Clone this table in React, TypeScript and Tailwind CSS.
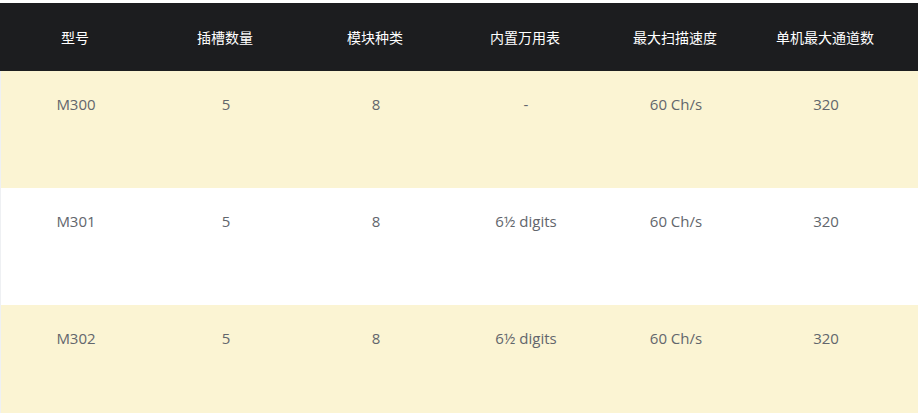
const HEADERS = ["型号", "插槽数量", "模块种类", "内置万用表", "最大扫描速度", "单机最大通道数"];

const ROWS = [
  ["M300", "5", "8", "-", "60 Ch/s", "320"],
  ["M301", "5", "8", "6½ digits", "60 Ch/s", "320"],
  ["M302", "5", "8", "6½ digits", "60 Ch/s", "320"],
];

const grid = "grid grid-cols-[repeat(6,150px)_1fr]";

export default function App() {
  return (
    <div
      className="h-[413px] w-[918px] overflow-hidden bg-white pt-[3px]"
      style={{ fontFamily: "'Open Sans', 'Noto Sans CJK SC', sans-serif" }}
    >
      <div className={`${grid} h-[68px] items-center bg-[#1c1d1f] text-[14px] text-white`}>
        {HEADERS.map((h) => (
          <div key={h} className="text-center">
            {h}
          </div>
        ))}
        <div />
      </div>
      {ROWS.map((r, i) => (
        <div
          key={i}
          className={`${grid} h-[117px] border-l border-[#eef0f3] pt-[23px] text-[15px] leading-5 text-[#62666c] ${
            i % 2 === 0 ? "bg-[#fbf4d3]" : "bg-white"
          }`}
        >
          {r.map((c, j) => (
            <div key={j} className="text-center">
              {c}
            </div>
          ))}
          <div />
        </div>
      ))}
    </div>
  );
}
